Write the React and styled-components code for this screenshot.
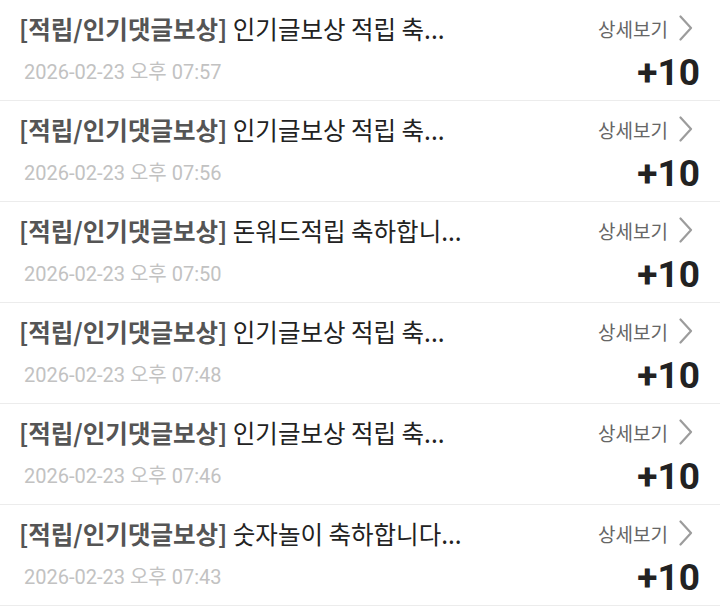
import styled, { createGlobalStyle } from 'styled-components';

const GlobalStyle = createGlobalStyle`
  html, body {
    margin: 0;
    padding: 0;
    background: #fff;
  }
  body {
    font-family: Roboto, "Noto Sans CJK KR", sans-serif;
    -webkit-font-smoothing: antialiased;
  }
`;

const rewards = [
  { title: '인기글보상 적립 축...', date: '2026-02-23 오후 07:57', point: 10 },
  { title: '인기글보상 적립 축...', date: '2026-02-23 오후 07:56', point: 10 },
  { title: '돈워드적립 축하합니...', date: '2026-02-23 오후 07:50', point: 10 },
  { title: '인기글보상 적립 축...', date: '2026-02-23 오후 07:48', point: 10 },
  { title: '인기글보상 적립 축...', date: '2026-02-23 오후 07:46', point: 10 },
  { title: '숫자놀이 축하합니다...', date: '2026-02-23 오후 07:43', point: 10 },
];

const ChevronRight = () => (
  <svg width="14" height="26" viewBox="0 0 14 26" fill="none">
    <path d="M1.5 1.5 L12 13 L1.5 24.5" stroke="#9c9c9c" strokeWidth="2.2" strokeLinecap="round" strokeLinejoin="round" />
  </svg>
);

const RewardItem = ({ title, date, point }) => {
  return (
    <Row>
      <Info>
        <Title>
          <Category>[적립/인기댓글보상]</Category> {title}
        </Title>
        <DateText>{date}</DateText>
      </Info>
      <Side>
        <DetailLink>
          상세보기
          <ChevronRight />
        </DetailLink>
        <Point>+{point}</Point>
      </Side>
    </Row>
  );
};

const App = () => {
  return (
    <>
      <GlobalStyle />
      <List>
        {rewards.map((item, i) => (
          <RewardItem key={i} {...item} />
        ))}
      </List>
    </>
  );
};

export default App;

const List = styled.ul`
  list-style: none;
  margin: 0;
  padding: 0;
  width: 720px;
`;

const Row = styled.li`
  display: flex;
  justify-content: space-between;
  height: 101px;
  box-sizing: border-box;
  padding: 10px 20px 0 19px;
  border-bottom: 1px solid #ececec;
`;

const Info = styled.div`
  display: flex;
  flex-direction: column;
`;

const Title = styled.div`
  font-family: "Noto Sans CJK KR", sans-serif;
  font-size: 24.5px;
  line-height: 38px;
  color: #222;
  white-space: nowrap;
`;

const Category = styled.span`
  font-weight: 700;
  color: #555;
`;

const DateText = styled.div`
  margin-top: 6px;
  margin-left: 5px;
  font-size: 20px;
  line-height: 36px;
  color: #c2c2c2;
`;

const Side = styled.div`
  display: flex;
  flex-direction: column;
  align-items: flex-end;
`;

const DetailLink = styled.a`
  display: flex;
  align-items: center;
  gap: 11px;
  height: 36px;
  margin-right: 7px;
  font-family: "Noto Sans CJK KR", sans-serif;
  font-size: 19px;
  color: #666;
  cursor: pointer;
`;

const Point = styled.div`
  margin-top: 5px;
  font-family: Roboto, sans-serif;
  font-weight: 700;
  font-size: 37px;
  line-height: 44px;
  color: #222;
`;
